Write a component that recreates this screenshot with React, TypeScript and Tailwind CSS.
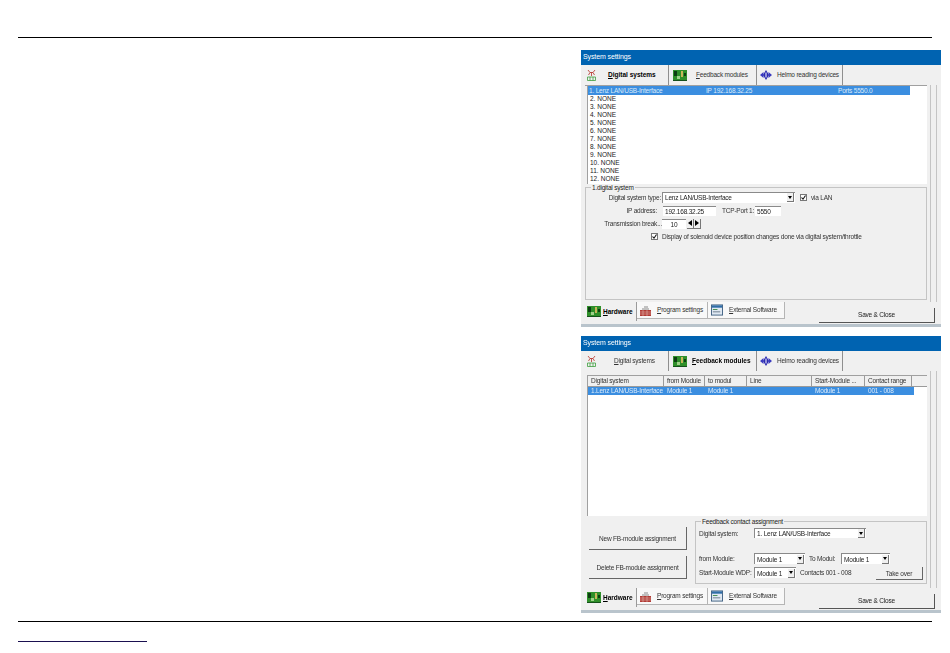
import React from "react";

const ff = "font-['Liberation_Sans',Arial,sans-serif]";

function IconDigital() {
  return (
    <svg width="9" height="12" viewBox="0 0 9 12" className="shrink-0">
      <path d="M1 1l2 2.5-1.5 2.5M8 1L6 3.5 7.5 6M3 3.5h3M4.5 3.5V7" stroke="#b5322a" strokeWidth="0.8" fill="none" />
      <path d="M0.5 8h8v3.5h-8zM3 8v3.5M6 8v3.5" stroke="#3f9e3f" strokeWidth="0.8" fill="none" />
    </svg>
  );
}
function IconBoard({ w = 14 }: { w?: number }) {
  return (
    <svg width={w} height="11" viewBox="0 0 14 11" className="shrink-0">
      <rect width="14" height="11" fill="#2f8f2a" />
      <rect x="1" y="1" width="3" height="5" fill="#0d3d12" />
      <rect x="8" y="1" width="2" height="6" fill="#c9b65a" />
      <rect x="4" y="6" width="3" height="3" fill="#9fd08a" />
      <rect x="11" y="3" width="2" height="3" fill="#0d3d12" />
      <path d="M0 10.5h14" stroke="#14501a" />
    </svg>
  );
}
function IconHelmo() {
  return (
    <svg width="12" height="10" viewBox="0 0 12 10" className="shrink-0">
      <path d="M0 5l3.5-3v6zM12 5L8.5 2v6z" fill="#3a3ac0" />
      <path d="M6 0l3 5-3 5-3-5z" fill="#2a2ab0" />
      <rect x="5.5" y="2.5" width="1" height="5" fill="#fff" />
    </svg>
  );
}
function IconProgram() {
  return (
    <svg width="11" height="11" viewBox="0 0 11 11" className="shrink-0">
      <rect x="0" y="5" width="11" height="6" fill="#b13a34" />
      <path d="M0 7h11M0 9h11M3 5v6M7 5v6" stroke="#e8c8c0" strokeWidth="0.5" />
      <path d="M2 4h7M4 2h4" stroke="#8a8a8a" />
    </svg>
  );
}
function IconExternal() {
  return (
    <svg width="12" height="12" viewBox="0 0 13 12" className="shrink-0">
      <rect x="0.5" y="0.5" width="12" height="11" fill="#dfe8f2" stroke="#3e5f80" />
      <rect x="1" y="1" width="11" height="2.5" fill="#2f6da8" />
      <rect x="2" y="5" width="5" height="1" fill="#3e8a4a" />
      <rect x="2" y="7.5" width="8" height="1" fill="#6a7a8a" />
    </svg>
  );
}

function TopTab({ icon, label, u, active, className }: { icon: React.ReactNode; label: string; u: string; active?: boolean; className: string }) {
  return (
    <div className={`h-[20px] flex items-center border-r border-[#8f8f8f] whitespace-nowrap ${className}`}>
      {icon}
      <span className={active ? "font-bold text-black tracking-normal" : "text-[#333]"}>
        <span className="underline">{u}</span>
        {label}
      </span>
    </div>
  );
}

function TopTabs({ active }: { active: 0 | 1 }) {
  return (
    <div className="h-[20px] flex items-center">
      <TopTab
        icon={<IconDigital />}
        u="D"
        label="igital systems"
        active={active === 0}
        className={`w-[88px] pl-[6px] ${active === 0 ? "gap-[12px]" : "gap-[18px]"}`}
      />
      <TopTab
        icon={<IconBoard />}
        u="F"
        label="eedback modules"
        active={active === 1}
        className={`w-[88px] pl-[4px] ${active === 1 ? "gap-[5px]" : "gap-[9px]"}`}
      />
      <TopTab
        icon={<IconHelmo />}
        u=""
        label="Helmo reading devices"
        className="w-[86px] pl-[3px] gap-[5px]"
      />
    </div>
  );
}

function BottomBar() {
  return (
    <div className="h-[22px] flex items-start pl-[3px] pr-[6px] whitespace-nowrap">
      <div className="h-[19px] w-[53px] flex items-center gap-[2px] pl-[3px] border-r border-[#9a9a9a] font-bold tracking-normal">
        <IconBoard />
        <span><span className="underline">H</span>ardware</span>
      </div>
      <div className="h-[17px] w-[71px] flex items-center gap-[6px] pl-[3px] bg-[#f8f8f8] border-r border-b border-[#b5b5b5]">
        <IconProgram />
        <span className="text-[#333]"><span className="underline">P</span>rogram settings</span>
      </div>
      <div className="h-[17px] w-[77px] flex items-center gap-[6px] pl-[3px] bg-[#f8f8f8] border-r border-b border-[#b5b5b5]">
        <IconExternal />
        <span className="text-[#333]"><span className="underline">E</span>xternal Software</span>
      </div>
      <div className="ml-auto mt-[6px] w-[116px] h-[15px] flex items-center justify-center bg-[#f0f0f0] border-r border-b border-[#555] text-[#222]">
        Save &amp; Close
      </div>
    </div>
  );
}

function Win({ children }: { children: React.ReactNode }) {
  return (
    <div className="w-[360px] bg-[#f0f0f0] border-b-[3px] border-[#b9c4cc] flex flex-col">
      <div className="h-[15px] bg-[#0063b1] text-white text-[7px] tracking-[-0.1px] flex items-center pl-[2px]">System settings</div>
      {children}
    </div>
  );
}

function Select({ w, text, h = "h-[11px]", className = "" }: { w: string; text: string; h?: string; className?: string }) {
  return (
    <div className={`${w} ${h} ${className} bg-white border-t border-l border-[#8a8a8a] flex items-center justify-between pl-[2px] pr-[1px] text-[#222] shrink-0`}>
      <span className="whitespace-nowrap">{text}</span>
      <span className="w-[7px] h-[9px] bg-[#f0f0f0] border-r border-b border-[#777] flex items-center justify-center">
        <span className="w-0 h-0 border-x-[2px] border-t-[3px] border-x-transparent border-t-black" />
      </span>
    </div>
  );
}

function Check({ className = "" }: { className?: string }) {
  return (
    <svg width="7" height="7" viewBox="0 0 7 7" className={`shrink-0 ${className}`}>
      <rect x="0.5" y="0.5" width="6" height="6" fill="#fff" stroke="#777" />
      <path d="M1.5 3.5l1.5 1.7 2.5-3.7" stroke="#111" strokeWidth="1.1" fill="none" />
    </svg>
  );
}

function Input({ w, text }: { w: string; text: string }) {
  return (
    <div className={`${w} h-[10px] bg-white border-t border-[#8a8a8a] flex items-center pl-[2px] text-[#222] shrink-0`}>{text}</div>
  );
}

function Legend({ children }: { children: React.ReactNode }) {
  return (
    <div className="absolute -top-[4px] left-[5px] bg-[#f0f0f0] px-[1px] leading-[8px] text-[#222] whitespace-nowrap">{children}</div>
  );
}

function Spinner() {
  return (
    <div className="flex ml-[1px]">
      <span className="w-[7px] h-[10px] bg-[#f0f0f0] border-r border-b border-[#777] flex items-center justify-center">
        <span className="w-0 h-0 border-y-[3px] border-r-[4px] border-y-transparent border-r-black" />
      </span>
      <span className="w-[7px] h-[10px] bg-[#f0f0f0] border-r border-b border-[#777] flex items-center justify-center">
        <span className="w-0 h-0 border-y-[3px] border-l-[4px] border-y-transparent border-l-black" />
      </span>
    </div>
  );
}

function PanelEdge() {
  return (
    <div className="flex-1 flex">
      <div className="ml-[3px] w-[7px] border-l border-r border-[#c4c4c4] bg-[#f0f0f0]" />
    </div>
  );
}

function Window1() {
  const rows = ["2. NONE", "3. NONE", "4. NONE", "5. NONE", "6. NONE", "7. NONE", "8. NONE", "9. NONE", "10. NONE", "11. NONE", "12. NONE"];
  return (
    <Win>
      <TopTabs active={0} />
      <div className="flex pl-[4px] h-[217px]">
        <div className="w-[342px] border-t border-[#a0a0a0] flex flex-col">
          <div className="ml-[2px] w-[340px] h-[98px] bg-white border-l border-[#a0a0a0] leading-[8px] text-[#222]">
            <div className="w-[322px] h-[9px] bg-[#3b8ee0] text-[#dcebfa] flex items-center pl-[1px]">
              <span className="w-[117px]">1. Lenz LAN/USB-Interface</span>
              <span className="w-[132px]">IP 192.168.32.25</span>
              <span>Ports 5550.0</span>
            </div>
            {rows.map((r) => (
              <div key={r} className="pl-[2px] h-[8px] tracking-normal">{r}</div>
            ))}
          </div>
          <div className="relative mt-[3px] h-[113px] border border-[#c4c4c4] leading-[9px] pt-[3px]">
            <Legend>1.digital system</Legend>
            <div className="flex items-center h-[12px]">
              <span className="w-[76px] text-right pr-[1px] text-[#333] whitespace-nowrap">Digital system type:</span>
              <Select w="w-[133px]" text="Lenz LAN/USB-Interface" />
              <Check className="ml-[5px]" />
              <span className="ml-[4px] text-[#333]">via LAN</span>
            </div>
            <div className="flex items-center h-[11px] mt-[2px]">
              <span className="w-[71px] text-right text-[#333] mr-[6px]">IP address:</span>
              <Input w="w-[53px]" text="192.168.32.25" />
              <span className="ml-[6px] w-[33px] whitespace-nowrap text-[#333]">TCP-Port 1:</span>
              <Input w="w-[26px]" text="5550" />
            </div>
            <div className="flex items-center h-[11px] mt-[2px]">
              <span className="w-[76px] text-right text-[#333] whitespace-nowrap">Transmission break...</span>
              <div className="w-[24px] h-[10px] bg-white border-t border-[#8a8a8a] flex items-center justify-center text-[#222]">10</div>
              <Spinner />
            </div>
            <div className="flex items-center mt-[3px] pl-[65px]">
              <Check />
              <span className="ml-[4px] text-[#333] whitespace-nowrap">Display of solenoid device position changes done via digital system/throttle</span>
            </div>
          </div>
        </div>
        <PanelEdge />
      </div>
      <BottomBar />
    </Win>
  );
}

function Btn({ children }: { children: React.ReactNode }) {
  return (
    <div className="w-[98px] h-[23px] flex items-center justify-center bg-[#f0f0f0] border-r border-b border-[#666] whitespace-nowrap">{children}</div>
  );
}

function Window2() {
  const cols: [string, string][] = [
    ["w-[76px]", "Digital system"],
    ["w-[41px]", "from Module"],
    ["w-[42px]", "to modul"],
    ["w-[65px]", "Line"],
    ["w-[53px]", "Start-Module ..."],
    ["w-[47px]", "Contact range"],
  ];
  const vals = ["1.Lenz LAN/USB-Interface", "Module 1", "Module 1", "", "Module 1", "001 - 008"];
  return (
    <Win>
      <TopTabs active={1} />
      <div className="flex pl-[4px] h-[217px]">
        <div className="w-[342px] flex flex-col">
          <div className="mt-[4px] ml-[2px] w-[340px] h-[141px] bg-white border-l border-t border-[#a0a0a0] leading-[8px] text-[#333]">
            <div className="flex h-[11px] bg-[#f0f0f0] border-b border-[#9a9a9a]">
              {cols.map(([w, t]) => (
                <div key={t} className={`${w} pl-[3px] border-r border-[#9a9a9a] flex items-center whitespace-nowrap overflow-hidden`}>{t}</div>
              ))}
            </div>
            <div className="flex h-[8px] w-[326px] bg-[#3b8ee0] text-[#dcebfa]">
              {cols.map(([w], i) => (
                <div key={i} className={`${w} pl-[3px] whitespace-nowrap overflow-hidden`}>{vals[i]}</div>
              ))}
            </div>
          </div>
          <div className="flex mt-[5px] leading-[9px] text-[#333]">
            <div className="w-[110px] flex flex-col gap-[6px] pl-[4px] pt-[6px]">
              <Btn>New FB-module assignment</Btn>
              <Btn>Delete FB-module assignment</Btn>
            </div>
            <div className="relative w-[232px] h-[63px] border border-[#c4c4c4] pl-[3px] pt-[6px]">
              <Legend>Feedback contact assignment</Legend>
              <div className="flex items-center h-[10px]">
                <span className="w-[55px] whitespace-nowrap">Digital system:</span>
                <Select w="w-[112px]" h="h-[10px]" text="1. Lenz LAN/USB-Interface" />
              </div>
              <div className="flex items-center h-[11px] mt-[15px]">
                <span className="w-[55px] whitespace-nowrap">from Module:</span>
                <Select w="w-[51px]" text="Module 1" />
                <span className="ml-[4px] w-[32px] whitespace-nowrap">To Modul:</span>
                <Select w="w-[49px]" text="Module 1" />
              </div>
              <div className="flex items-start h-[14px] mt-[3px]">
                <span className="w-[55px] whitespace-nowrap mt-[1px]">Start-Module WDP:</span>
                <Select w="w-[42px]" text="Module 1" />
                <span className="ml-[4px] w-[76px] mt-[1px] whitespace-nowrap">Contacts 001 - 008</span>
                <div className="w-[47px] h-[13px] flex items-center justify-center border-r border-b border-[#666]">Take over</div>
              </div>
            </div>
          </div>
        </div>
        <PanelEdge />
      </div>
      <BottomBar />
    </Win>
  );
}

export default function App() {
  return (
    <div className={`${ff} relative w-[950px] h-[653px] bg-white overflow-hidden flex flex-col text-[6.5px] tracking-[-0.2px]`}>
      <div className="mt-[37px] ml-[18px] w-[914px] border-t border-black" />
      <div className="flex flex-col items-start pl-[581px] mt-[12px] gap-[9px] blur-[0.35px]">
        <Window1 />
        <Window2 />
      </div>
      <div className="mt-[8px] ml-[18px] w-[914px] border-t border-black" />
      <div className="mt-[19px] ml-[18px] w-[129px] border-t border-[#1a1050]" />
    </div>
  );
}
